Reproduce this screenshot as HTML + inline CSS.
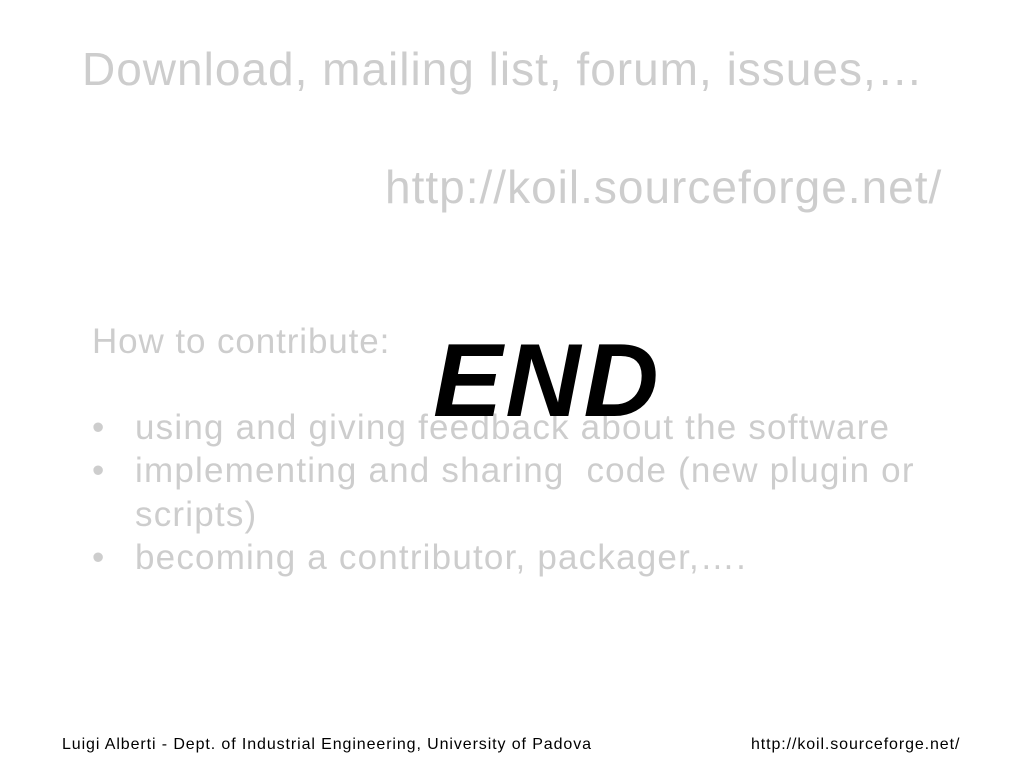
<!DOCTYPE html>
<html><head><style>
html,body{margin:0;padding:0;background:#fff;}
body{width:1024px;height:768px;position:relative;overflow:hidden;font-family:"Liberation Sans",sans-serif;}
.g{position:absolute;color:#cdcdcd;white-space:nowrap;}
.t1{left:82px;top:42px;font-size:46px;letter-spacing:1px;}
.t2{left:385px;top:160px;font-size:46px;letter-spacing:1px;}
.h{left:92px;top:322px;font-size:35px;letter-spacing:0.9px;}
.b{left:92px;font-size:35px;letter-spacing:1.2px;}
.b span{position:absolute;left:43px;}
.end{position:absolute;left:433px;top:322px;font-size:104px;font-weight:bold;font-style:italic;color:#000;letter-spacing:3px;}
.f{position:absolute;top:736px;font-size:16px;color:#000;white-space:nowrap;letter-spacing:0.9px;}
</style></head><body>
<div class="g t1">Download, mailing list, forum, issues,…</div>
<div class="g t2">http://koil.sourceforge.net/</div>
<div class="g h">How to contribute:</div>
<div class="g b" style="top:408px">•<span>using and giving feedback about the software</span></div>
<div class="g b" style="top:451px">•<span>implementing and sharing&nbsp; code (new plugin or</span></div>
<div class="g b" style="top:495px"><span>scripts)</span></div>
<div class="g b" style="top:538px">•<span>becoming a contributor, packager,….</span></div>
<div class="end">END</div>
<div class="f" style="left:62px">Luigi Alberti - Dept. of Industrial Engineering, University of Padova</div>
<div class="f" style="left:751px">http://koil.sourceforge.net/</div>
</body></html>
